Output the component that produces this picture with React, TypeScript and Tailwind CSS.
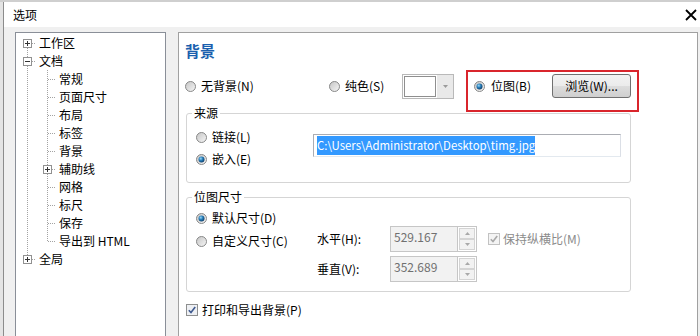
import React from "react";

type Cell = "boxFirst" | "boxMid" | "boxLast" | "line" | "tee" | "elbow" | "boxTee";

const tree: { label: string; cells: Cell[]; sign?: "+" | "-" }[] = [
  { label: "工作区", cells: ["boxFirst"], sign: "+" },
  { label: "文档", cells: ["boxMid"], sign: "-" },
  { label: "常规", cells: ["line", "tee"] },
  { label: "页面尺寸", cells: ["line", "tee"] },
  { label: "布局", cells: ["line", "tee"] },
  { label: "标签", cells: ["line", "tee"] },
  { label: "背景", cells: ["line", "tee"] },
  { label: "辅助线", cells: ["line", "boxTee"], sign: "+" },
  { label: "网格", cells: ["line", "tee"] },
  { label: "标尺", cells: ["line", "tee"] },
  { label: "保存", cells: ["line", "tee"] },
  { label: "导出到 HTML", cells: ["line", "elbow"] },
  { label: "全局", cells: ["boxLast"], sign: "+" },
];

const dot = { stroke: "#a3a3a3", strokeWidth: 1, strokeDasharray: "1 1" };

const TreeCell = ({ kind, sign }: { kind: Cell; sign?: "+" | "-" }) => {
  const hasBox = kind.startsWith("box");
  return (
    <svg width="20" height="18" viewBox="0 0 20 18" className="shrink-0">
      {(kind === "line" || kind === "tee") && <line x1="11.5" y1="0" x2="11.5" y2="18" {...dot} />}
      {kind === "elbow" && <line x1="11.5" y1="0" x2="11.5" y2="10" {...dot} />}
      {(kind === "tee" || kind === "elbow") && <line x1="12" y1="9.5" x2="20" y2="9.5" {...dot} />}
      {(kind === "boxMid" || kind === "boxLast" || kind === "boxTee") && (
        <line x1="11.5" y1="0" x2="11.5" y2="5" {...dot} />
      )}
      {(kind === "boxMid" || kind === "boxFirst" || kind === "boxTee") && (
        <line x1="11.5" y1="14" x2="11.5" y2="18" {...dot} />
      )}
      {hasBox && (
        <>
          <line x1="16" y1="9.5" x2="20" y2="9.5" {...dot} />
          <rect x="7.5" y="5.5" width="8" height="8" fill="#fff" stroke="#919191" />
          <line x1="9" y1="9.5" x2="14" y2="9.5" stroke="#333" />
          {sign === "+" && <line x1="11.5" y1="7" x2="11.5" y2="12" stroke="#333" />}
        </>
      )}
    </svg>
  );
};

const Radio = ({ checked }: { checked?: boolean }) => (
  <svg width="11" height="11" viewBox="0 0 11 11" className="shrink-0">
    <defs>
      <linearGradient id="radioBg" x1="0" y1="0" x2="1" y2="1">
        <stop offset="0" stopColor="#c4c4c4" />
        <stop offset="1" stopColor="#f7f7f7" />
      </linearGradient>
      <radialGradient id="radioDot" cx="0.38" cy="0.35" r="0.7">
        <stop offset="0" stopColor="#9bd8f6" />
        <stop offset="0.45" stopColor="#2a80bb" />
        <stop offset="1" stopColor="#0c3a66" />
      </radialGradient>
    </defs>
    <circle cx="5.5" cy="5.5" r="5" fill="url(#radioBg)" stroke="#888989" />
    {checked && <circle cx="5.5" cy="5.5" r="3" fill="url(#radioDot)" />}
  </svg>
);

const Check = ({ disabled }: { disabled?: boolean }) => (
  <svg width="12" height="12" viewBox="0 0 12 12" className="shrink-0">
    <rect x="0.5" y="0.5" width="11" height="11" fill={disabled ? "#f4f4f4" : "#eef0f4"} stroke={disabled ? "#c2c2c2" : "#8e8f8f"} />
    <path
      d="M2.8 6.2 L5 8.6 L9.2 3"
      fill="none"
      stroke={disabled ? "#a9a9a9" : "#3f5a8f"}
      strokeWidth="1.6"
    />
  </svg>
);

const Spin = ({ value }: { value: string }) => (
  <div className="flex h-[26px]">
    <div className="w-[68px] border border-[#c6c6c6] bg-[#f2f2f2] pl-[3px] pt-[2px] text-[#707070]">{value}</div>
    <div className="flex w-[19px] flex-col border border-l-0 border-[#c6c6c6] bg-white p-[1px]">
      <div className="flex flex-1 items-center justify-center border border-[#d4d4d4] bg-[#f2f2f2]">
        <svg width="5" height="3" viewBox="0 0 5 3">
          <path d="M0 3 L2.5 0 L5 3 Z" fill="#a8a8a8" />
        </svg>
      </div>
      <div className="flex flex-1 items-center justify-center border border-[#d4d4d4] bg-[#f2f2f2]">
        <svg width="5" height="3" viewBox="0 0 5 3">
          <path d="M0 0 L2.5 3 L5 0 Z" fill="#a8a8a8" />
        </svg>
      </div>
    </div>
  </div>
);

export default function App() {
  return (
    <div className="flex h-[336px] w-[700px] flex-col overflow-hidden bg-[#f0f0f0] font-['Noto_Sans_CJK_SC',sans-serif] text-[12px] leading-[16px] text-black">
      <div className="h-[2px] shrink-0 bg-[#cfcfcf]" />
      <div className="flex min-h-0 flex-1">
        <div className="w-[3px] shrink-0 bg-[#e4e4e4]" />
        <div className="flex min-w-0 flex-1 flex-col border-l border-[#8c8c8c]">
          {/* Title bar */}
          <div className="flex h-[25px] shrink-0 items-center justify-between bg-white pl-[9px] pr-[3px]">
            <span>选项</span>
            <svg width="12" height="12" viewBox="0 0 12 12">
              <path d="M1 1 L11 11 M11 1 L1 11" stroke="#000" strokeWidth="1.8" />
            </svg>
          </div>

          <div className="flex min-h-0 flex-1 items-start gap-[12px] pl-[11px] pr-[2px] pt-[5px]">
            {/* Tree */}
            <div className="h-[400px] w-[151px] shrink-0 border border-[#8a8f98] bg-white pt-[1px]">
              {tree.map((item) => (
                <div key={item.label} className="flex h-[18px] items-center leading-[18px]">
                  {item.cells.map((c, i) => (
                    <TreeCell key={i} kind={c} sign={c.startsWith("box") ? item.sign : undefined} />
                  ))}
                  <span className="ml-[3px] whitespace-nowrap">{item.label}</span>
                </div>
              ))}
            </div>

            {/* Settings */}
            <div className="h-[400px] min-w-0 flex-1 border border-[#a0a0a0] bg-white">
              <div className="pl-[6px] pt-[8px] text-[15px] font-bold leading-[20px] text-[#1b5fae]">背景</div>

              <div className="mt-[12px] flex h-[26px] items-center pl-[6px]">
                <div className="flex w-[144px] items-center">
                  <Radio />
                  <span className="ml-[5px]">无背景(N)</span>
                </div>
                <div className="flex w-[73px] items-center">
                  <Radio />
                  <span className="ml-[5px]">纯色(S)</span>
                </div>
                <div className="flex h-[25px] w-[52px] border border-[#b9b9b9]">
                  <div className="m-[1px] flex-1 border border-[#8f8f8f] bg-white" />
                  <div className="flex w-[16px] items-center justify-center bg-[#e9e9e9]">
                    <svg width="5" height="3" viewBox="0 0 5 3">
                      <path d="M0 0 L2.5 3 L5 0 Z" fill="#9a9a9a" />
                    </svg>
                  </div>
                </div>
                <div className="relative ml-[20px] flex items-center">
                  <div className="flex w-[78px] items-center">
                    <Radio checked />
                    <span className="ml-[6px]">位图(B)</span>
                  </div>
                  <button className="flex h-[24px] w-[79px] items-center justify-center rounded-[3px] border border-[#707070] bg-[linear-gradient(#f2f2f2,#ebebeb_50%,#dddddd_50%,#cfcfcf)]">
                    浏览(W)...
                  </button>
                  <div className="absolute -bottom-[14px] -left-[8px] -right-[8px] -top-[4px] border-2 border-[#d9252c]" />
                </div>
              </div>

              {/* 来源 */}
              <fieldset className="ml-[7px] mt-[6px] w-[445px] rounded-[3px] border border-[#d5d5d5] p-0">
                <legend className="ml-[5px] px-[2px]">来源</legend>
                <div className="flex pb-[12px] pl-[9px] pt-[5px]">
                  <div className="flex w-[117px] flex-col">
                    <div className="flex h-[22px] items-center">
                      <Radio />
                      <span className="ml-[5px]">链接(L)</span>
                    </div>
                    <div className="flex h-[22px] items-center">
                      <Radio checked />
                      <span className="ml-[5px]">嵌入(E)</span>
                    </div>
                  </div>
                  <div className="mt-[8px] h-[23px] w-[308px] border border-[#abadb3] border-b-[#e3e9ef] border-r-[#dbdfe6] px-[3px] pt-[1px]">
                    <span className="inline-block whitespace-nowrap bg-[#3399ff] text-[11.4px] leading-[19px] text-white">
                      C:\Users\Administrator\Desktop\timg.jpg
                    </span>
                  </div>
                </div>
              </fieldset>

              {/* 位图尺寸 */}
              <fieldset className="ml-[7px] mt-[6px] w-[445px] rounded-[3px] border border-[#d5d5d5] p-0">
                <legend className="ml-[5px] px-[2px]">位图尺寸</legend>
                <div className="flex pb-[9px] pl-[9px]">
                  <div className="flex w-[121px] flex-col gap-[1px] pt-[2px]">
                    <div className="flex h-[22px] items-center">
                      <Radio checked />
                      <span className="ml-[5px]">默认尺寸(D)</span>
                    </div>
                    <div className="flex h-[22px] items-center">
                      <Radio />
                      <span className="ml-[5px]">自定义尺寸(C)</span>
                    </div>
                  </div>
                  <div className="mt-[21px] grid grid-cols-[73px_87px_auto] gap-y-[4px]">
                    <div className="flex items-center">水平(H):</div>
                    <Spin value="529.167" />
                    <div className="ml-[11px] flex items-center text-[#8b8b8b]">
                      <Check disabled />
                      <span className="ml-[3px]">保持纵横比(M)</span>
                    </div>
                    <div className="flex items-center">垂直(V):</div>
                    <Spin value="352.689" />
                    <div />
                  </div>
                </div>
              </fieldset>

              <div className="mt-[9px] flex h-[18px] items-center pl-[7px]">
                <Check />
                <span className="ml-[4px]">打印和导出背景(P)</span>
              </div>
            </div>
          </div>
        </div>
      </div>
    </div>
  );
}
